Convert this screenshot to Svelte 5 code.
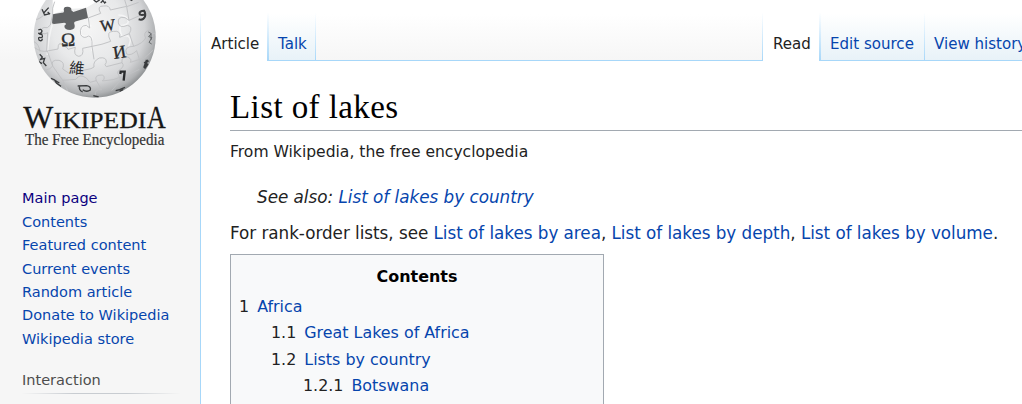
<script>
  const nav = ['Main page', 'Contents', 'Featured content', 'Current events', 'Random article', 'Donate to Wikipedia', 'Wikipedia store'];
  const toc = [
    { n: '1', t: 'Africa', level: 0 },
    { n: '1.1', t: 'Great Lakes of Africa', level: 1 },
    { n: '1.2', t: 'Lists by country', level: 1 },
    { n: '1.2.1', t: 'Botswana', level: 2 }
  ];
</script>

<div class="page">
  <aside>
    <svg class="logo" viewBox="0 0 600 480" width="200" height="160" aria-label="Wikipedia, The Free Encyclopedia">
      <defs>
        <radialGradient id="ball" cx="45%" cy="42%" r="59%">
          <stop offset="0" stop-color="#f5f5f5" />
          <stop offset=".5" stop-color="#e8e9ea" />
          <stop offset=".78" stop-color="#d2d3d5" />
          <stop offset=".93" stop-color="#b0b2b4" />
          <stop offset="1" stop-color="#909395" />
        </radialGradient>
        <clipPath id="round"><circle cx="284" cy="110" r="183" /></clipPath>
      </defs>
      <circle cx="284" cy="110" r="183" fill="url(#ball)" />
      <g clip-path="url(#round)">
        <path d="M158 -10H276L284 8L263 21L256 24L205 27L158 43Z" fill="#fff" />
        <path d="M158 43L185 38Q193 39 192 33Q188 20 202 20Q216 20 214 31L220 36L258 23L264 54L231 63Q220 65 223 72Q229 88 211 90Q193 90 193 77Q203 70 193 68L156 73Z" fill="#626466" />
        <g fill="none" stroke="#fff" stroke-width="5" opacity=".55">
          <path d="M158 70Q145 110 142 165M266 52Q263 70 270 76Q250 74 244 88Q237 111 260 109Q278 101 277 128L276 154M355 45Q382 45 385 64Q384 76 362 77Q356 88 366 108Q391 102 391 123L386 140" />
        </g>
        <g fill="none" stroke="#bfc1c3" stroke-width="2.8" stroke-linejoin="round">
          <path d="M158 43L151 75L142 83Q119 79 126 99Q135 105 143 98L140 155" />
          <path d="M102 142Q125 158 142 153L174 147Q174 121 190 137Q204 142 204 148L226 142Q219 166 236 169Q252 168 248 145L276 139Q278 107 265 108Q251 118 242 104Q237 77 259 76L269 84L265 54" />
          <path d="M276 139Q307 134 332 124Q316 93 341 94Q363 91 359 112L388 101Q400 79 382 76Q359 86 355 69Q352 48 375 53L387 61L380 20L416 7" />
          <path d="M264 54L302 40Q289 17 311 18Q329 15 331 30L380 19L371 -10" />
          <path d="M388 101L401 139Q370 139 380 162Q392 169 410 152L423 193" />
          <path d="M401 139Q429 130 437 114Q429 99 443 92Q455 87 454 103L468 98M387 61Q415 51 440 33" />
          <path d="M142 153L158 198Q151 178 177 181Q196 186 188 207L207 220L273 206L282 201Q278 184 298 174Q320 170 319 187Q311 195 319 200L366 188Q363 169 384 171Q397 179 391 187L433 174L460 150" />
          <path d="M276 139L282 178M158 198Q142 219 120 200M158 198L188 241L228 238Q238 220 259 234L270 247L289 242Q281 224 308 225Q318 234 307 243L339 239L382 225L418 208" />
          <path d="M188 241L207 280M289 242L305 269Q282 267 286 287M366 188Q375 198 361 208Q348 215 356 225L361 241L335 272M137 40Q117 60 106 58M164 5Q155 25 158 43M102 125Q117 132 120 155" />
        </g>
        <g fill="#292b2d" font-family="Liberation Serif, serif">
          <text x="184" y="139" font-size="57" stroke="#292b2d" stroke-width="1" transform="rotate(-2 183 138)">Ω</text>
          <text x="302" y="95" font-size="48" stroke="#292b2d" stroke-width="1" transform="rotate(-7 301 94)">W</text>
          <text x="342" y="177" font-size="54" stroke="#292b2d" stroke-width="1" transform="rotate(-9 342 177)">И</text>
          <text x="206" y="219" font-size="46" font-family="Noto Sans CJK SC, sans-serif" transform="rotate(5 207 220)">維</text>
        </g>
        <g fill="none" stroke="#3a3c3e" stroke-width="5">
          <path stroke-width="7" stroke="#292b2d" d="M361 222L362 215H374L371 242" />
          <path stroke-width="6" d="M432 32C413 32 414 51 435 43M431 30Q438 40 435 50Q430 62 416 58" />
          <path stroke-width="4" d="M126 28L134 45L150 41M131 39L146 23M143 36L150 43" />
          <path stroke-width="4" d="M115 90Q123 85 126 93Q123 103 115 99Q122 106 127 101M126 105Q130 113 122 113Q113 110 117 120Q126 126 127 116" />
          <path stroke-width="4" d="M119 163L127 171L122 178L134 175L130 188L139 198M116 185L126 191M153 235L164 240L169 249L183 259M166 242L178 249" />
          <path stroke-width="4" d="M233 258L260 257Q274 260 271 270Q260 278 248 269M239 258Q235 270 248 276" />
          <path stroke-width="4" d="M280 287L296 291M347 272L359 269L375 262M359 274L370 269" />
          <path stroke-width="3" stroke="#66696b" d="M445 96L454 101L446 110L456 113L447 127L455 132M453 102V120" />
          <path stroke-width="7" d="M445 181L436 188L441 194L433 205M441 180L433 203" />
          <path stroke-width="4" d="M281 0L289 6L299 0M305 -3L314 9L318 5M302 8L309 2M387 -3L397 2" />
        </g>
      </g>
      <g fill="#171717" font-family="Liberation Serif, serif" stroke="#171717" stroke-width=".8">
        <text x="70" y="383" font-size="93" textLength="90" lengthAdjust="spacingAndGlyphs">W</text>
        <text x="161" y="383" font-size="68" textLength="278" lengthAdjust="spacingAndGlyphs">IKIPEDI</text>
        <text x="440" y="383" font-size="93" textLength="57" lengthAdjust="spacingAndGlyphs">A</text>
      </g>
      <text x="75" y="434" fill="#333" stroke="#333" stroke-width=".6" font-size="48" font-family="Liberation Serif, serif" textLength="418" lengthAdjust="spacingAndGlyphs">The Free Encyclopedia</text>
    </svg>
    <nav>
      {#each nav as item, i}
        <a href="#top" class:visited={i === 0}>{item}</a>
      {/each}
    </nav>
    <h3>Interaction</h3>
  </aside>
  <main>
    <header>
      <div class="tab article">Article</div>
      <a class="tab talk" href="#top">Talk</a>
      <div class="space"></div>
      <div class="tab read">Read</div>
      <a class="tab edit" href="#top">Edit source</a>
      <a class="tab history" href="#top">View history</a>
    </header>
    <article>
      <h1>List of lakes</h1>
      <p class="sub">From Wikipedia, the free encyclopedia</p>
      <p class="also">See also: <a href="#top">List of lakes by country</a></p>
      <p class="intro">For rank-order lists, see <a href="#top">List of lakes by area</a>, <a href="#top">List of lakes by depth</a>, <a href="#top">List of lakes by volume</a>.</p>
      <section class="toc">
        <h2>Contents</h2>
        {#each toc as row}
          <div class="row l{row.level}"><span>{row.n}</span><a href="#top">{row.t}</a></div>
        {/each}
      </section>
    </article>
  </main>
</div>

<style>
  :global(body) { margin: 0; overflow: hidden; }
  .page { display: flex; width: 1022px; height: 404px; overflow: hidden; font-family: "DejaVu Sans", sans-serif; color: #222; background: linear-gradient(#fff 14px, #f6f6f6 60px); white-space: nowrap; }
  a { color: #0645ad; text-decoration: none; }
  aside { width: 200px; flex: none; }
  .logo { display: block; }
  nav { padding: 27.4px 0 0 22px; display: flex; flex-direction: column; font-size: 14.53px; line-height: 23.4px; }
  nav a.visited { color: #0b0080; }
  h3 { margin: 18px 20px 0 22px; padding-bottom: 1px; font-size: 14.53px; line-height: 23px; font-weight: normal; color: #4d4d4d; border-bottom: 1px solid; border-image: linear-gradient(to right, #f6f6f6, #c8ccd1 33%, #c8ccd1 66%, #f6f6f6) 1; }
  main { flex: 1; min-width: 0; border-left: 1px solid; border-image: linear-gradient(#fff 13px, #a7d7f9 60px) 1; background: #fff; }
  header { height: 61px; box-sizing: border-box; display: flex; background: linear-gradient(#a7d7f9, #a7d7f9) 0 60px / 100% 1px no-repeat, linear-gradient(#fff 14px, #f6f6f6 60px); font-size: 15.05px; }
  .tab { box-sizing: border-box; height: 61px; padding: 34px 0 0 9px; line-height: 20px; flex: none; border-right: 1px solid; border-image: linear-gradient(#fff 13px, #a7d7f9 60px) 1; }
  a.tab { background: linear-gradient(#a7d7f9, #a7d7f9) 0 60px / 100% 1px no-repeat, linear-gradient(#fff 14px, #e8f2f8 60px); }
  .article, .read { background: #fff; border-right-width: 2px; padding-left: 10px; }
  .article { width: 68px; }
  .talk { width: 47px; }
  .space { width: 446px; flex: none; border-right: 1px solid; border-image: linear-gradient(#fff 13px, #a7d7f9 60px) 1; }
  .read { width: 58px; }
  .edit { width: 104px; }
  .history { width: 105px; }
  article { padding: 25px 0 0 29px; }
  h1 { margin: 0; height: 44px; border-bottom: 1px solid #a2a9b1; color: #000; font: normal 33px/42px "Linux Libertine", "Liberation Serif", serif; letter-spacing: .42px; }
  p { margin: 0; }
  .sub { padding-top: 11px; line-height: 20px; font-size: 15.57px; }
  .also { padding: 23px 0 0 27px; line-height: 24px; font-size: 16.8px; letter-spacing: -.01px; font-style: italic; }
  .intro { padding-top: 12px; line-height: 24px; font-size: 16.8px; letter-spacing: -.03px; }
  .toc { box-sizing: border-box; width: 374px; height: 180px; margin-top: 9px; padding: 8px; border: 1px solid #a2a9b1; background: #f8f9fa; font-size: 15.9px; }
  h2 { margin: 0 0 4px; text-align: center; font-size: 15.95px; line-height: 27px; color: #000; }
  .row { display: flex; gap: 8px; line-height: 26.4px; }
  .l1 { padding-left: 32px; }
  .l2 { padding-left: 64px; }
</style>
